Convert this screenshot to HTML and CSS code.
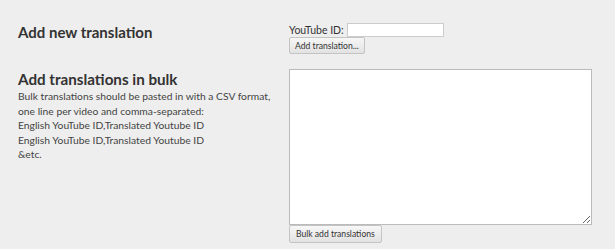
FILE: index.html
```html
<!DOCTYPE html>
<html lang="en">
<head>
    <meta charset="UTF-8" />
    <meta name="viewport" content="width=device-width, initial-scale=1.0" />
    <title>Translations</title>
    <link rel="stylesheet" href="styles.css">
</head>
<body>
    <section class="row single">
        <h2>Add new translation</h2>
        <div class="controls">
            <label for="youtubeId">YouTube ID: <input type="text" id="youtubeId" /></label>
            <button type="button">Add translation...</button>
        </div>
    </section>

    <section class="row bulk">
        <div class="info">
            <h2>Add translations in bulk</h2>
            <p>Bulk translations should be pasted in with a CSV format,<br>
            one line per video and comma-separated:<br>
            English YouTube ID,Translated Youtube ID<br>
            English YouTube ID,Translated Youtube ID<br>
            &amp;etc.</p>
        </div>
        <div class="controls">
            <textarea id="bulkData"></textarea>
            <button type="button">Bulk add translations</button>
        </div>
    </section>
</body>
</html>
```

FILE: styles.css
```css
body {
    font-family: Lato, "Open Sans", sans-serif;
    margin: 0;
    padding: 22px 0 0 18px;
    background-color: #eeeeee;
    color: #444;
}
.row {
    display: grid;
    grid-template-columns: 271px 1fr;
}
.bulk {
    margin-top: 15px;
}
h2 {
    margin: 0;
    color: #333;
    font-weight: bold;
    font-size: 15px;
    line-height: 20px;
}
.bulk h2 {
    font-size: 15.2px;
}
p {
    margin: 0;
    font-size: 10.3px;
    line-height: 14.5px;
}
.controls {
    display: flex;
    flex-direction: column;
    align-items: flex-start;
}
label {
    font-size: 10.5px;
    color: #333;
    display: flex;
    align-items: center;
    gap: 3px;
    height: 15px;
}
input {
    width: 97px;
    height: 14px;
    padding: 0 2px;
    border: 1px solid #ccc;
    background: white;
    box-sizing: border-box;
}
textarea {
    width: 303px;
    height: 156px;
    border: 1px solid #bbb;
    background: white;
    box-sizing: border-box;
    margin: 0;
    display: block;
}
button {
    margin: 0;
    height: 17px;
    padding: 0 5px;
    font-family: Lato, "Open Sans", sans-serif;
    font-size: 8.6px;
    color: #333;
    border: 1px solid #c4c4c4;
    border-radius: 2px;
    background: linear-gradient(#f7f7f7, #e2e2e2);
    cursor: pointer;
}
.bulk button {
    height: 18px;
    padding: 0 6px;
}
```
